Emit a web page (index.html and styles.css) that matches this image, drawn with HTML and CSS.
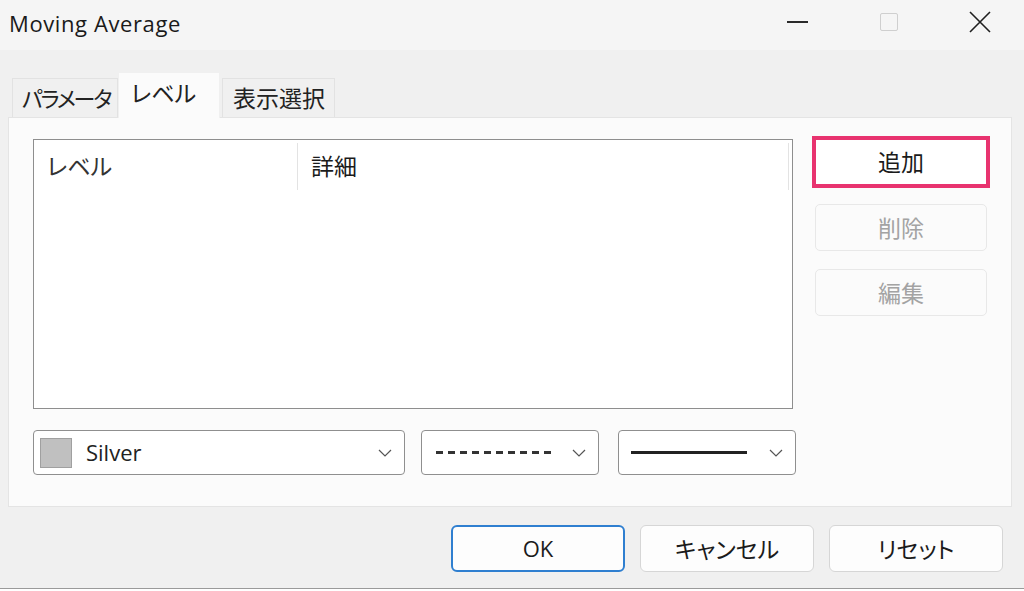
FILE: index.html
```html
<!DOCTYPE html>
<html lang="ja">
<head>
<meta charset="utf-8">
<link rel="stylesheet" href="styles.css">
</head>
<body>
<div class="window">
  <div class="titlebar">
    <div class="title">Moving Average</div>
    <div class="controls">
      <div class="ctl"><span class="min"></span></div>
      <div class="ctl"><span class="max"></span></div>
      <div class="ctl close">
        <svg width="24" height="24" viewBox="0 0 24 24"><path d="M2 2 L22 22 M22 2 L2 22" stroke="#1f1f1f" stroke-width="1.6" fill="none"/></svg>
      </div>
    </div>
  </div>
  <div class="body">
    <div class="tabs">
      <div class="tab t-param">パラメータ</div>
      <div class="tab active">レベル</div>
      <div class="tab t-view">表示選択</div>
    </div>
    <div class="panel">
      <div class="main">
        <div class="list">
          <div class="list-head">
            <div class="col col1">レベル</div>
            <div class="col col2">詳細</div>
          </div>
        </div>
        <div class="side">
          <div class="btn add">追加</div>
          <div class="btn disabled">削除</div>
          <div class="btn disabled">編集</div>
        </div>
      </div>
      <div class="selects">
        <div class="select s-color">
          <span class="swatch"></span>
          <span class="label">Silver</span>
          <span class="chev"><svg width="14" height="8" viewBox="0 0 14 8"><path d="M1 1 L7 7 L13 1" stroke="#555" stroke-width="1.2" fill="none"/></svg></span>
        </div>
        <div class="select s-small">
          <span class="dash"></span>
          <span class="chev"><svg width="14" height="8" viewBox="0 0 14 8"><path d="M1 1 L7 7 L13 1" stroke="#555" stroke-width="1.2" fill="none"/></svg></span>
        </div>
        <div class="select s-small">
          <span class="solid"></span>
          <span class="chev"><svg width="14" height="8" viewBox="0 0 14 8"><path d="M1 1 L7 7 L13 1" stroke="#555" stroke-width="1.2" fill="none"/></svg></span>
        </div>
      </div>
    </div>
    <div class="footer">
      <div class="fbtn ok">OK</div>
      <div class="fbtn">キャンセル</div>
      <div class="fbtn">リセット</div>
    </div>
  </div>
</div>
</body>
</html>
```

FILE: styles.css
```css
* { box-sizing: border-box; }
html, body { margin: 0; padding: 0; }
body {
  background: #ffffff;
  font-family: "Noto Sans CJK JP", "Noto Sans", sans-serif;
  color: #1b1b1b;
  font-feature-settings: "palt";
}
.window {
  width: 1024px;
  height: 589px;
  background: #f0f0f0;
  border-bottom: 1px solid #9a9a9a;
}
.titlebar {
  height: 50px;
  background: #f5f5f5;
  display: flex;
  align-items: center;
  justify-content: space-between;
}
.title {
  font-family: "Open Sans", "Noto Sans", sans-serif;
  font-size: 22px;
  letter-spacing: 0.6px;
  padding-left: 9px;
  padding-bottom: 5px;
  color: #1a1a1a;
}
.controls { display: flex; height: 100%; }
.ctl {
  width: 92px;
  display: flex;
  align-items: center;
  justify-content: center;
  padding-bottom: 6px;
}
.ctl.close { width: 89px; }
.min { width: 21px; height: 2px; background: #2a2a2a; }
.max { width: 18px; height: 18px; border: 1.5px solid #cfcfcf; border-radius: 2px; }
.body { padding: 22px 12px 0 8px; }
.tabs { display: flex; align-items: flex-end; height: 45px; padding-left: 4px; }
.tab {
  font-size: 23px;
  height: 39px;
  padding: 0 0 2px 10px;
  display: flex;
  align-items: center;
  white-space: nowrap;
  overflow: hidden;
  background: #f0f0f0;
  border: 1px solid #e2e2e2;
  border-bottom: none;
  color: #222;
}
.t-param { width: 106px; font-size: 22px; letter-spacing: -2.2px; padding-left: 9px; }
.tab.active {
  height: 46px;
  width: 102px;
  background: #fbfbfb;
  border-color: #f0f0f0;
  padding-left: 12px;
  padding-bottom: 8px;
  margin-bottom: -1px;
  position: relative;
  z-index: 1;
}
.t-view { width: 113px; margin-left: 2px; }
.panel {
  height: 390px;
  background: #fbfbfb;
  border: 1px solid #e4e4e4;
  padding: 21px 0 0 24px;
}
.main { display: flex; }
.list {
  width: 760px;
  height: 270px;
  background: #fff;
  border: 1.5px solid #8e8e8e;
}
.list-head { display: flex; height: 50px; padding-top: 3px; }
.col {
  font-size: 23px;
  display: flex;
  align-items: center;
  padding-bottom: 4px;
}
.col1 { width: 264px; padding-left: 13px; border-right: 1px solid #e3e3e3; color: #333; }
.col2 { width: 491px; padding-left: 13px; border-right: 1px solid #e3e3e3; }
.side {
  display: flex;
  flex-direction: column;
  margin-left: 19px;
  margin-top: -3px;
}
.btn {
  width: 172px;
  height: 47px;
  font-size: 23px;
  display: flex;
  align-items: center;
  justify-content: center;
  border: 1px solid #e8e8e8;
  border-radius: 5px;
  background: #fbfbfb;
  margin-left: 3px;
  margin-bottom: 18px;
  padding-bottom: 2px;
}
.btn.add {
  width: 178px;
  height: 52px;
  margin-left: 0;
  margin-bottom: 16px;
  border: 4px solid #e8336f;
  border-radius: 0;
  background: #ffffff;
  color: #1b1b1b;
}
.btn.disabled { color: #a3a3a3; }
.selects { display: flex; margin-top: 21px; }
.select {
  height: 45px;
  background: #fff;
  border: 1.5px solid #8f8f8f;
  border-radius: 4px;
  display: flex;
  align-items: center;
}
.s-color { width: 372px; padding-left: 6px; }
.s-small { width: 178px; margin-left: 16px; padding-left: 14px; }
.s-small:last-child { margin-left: 19px; padding-left: 12px; }
.swatch {
  width: 32px;
  height: 30px;
  background: #c0c0c0;
  border: 1.5px solid #a0a0a0;
}
.label {
  font-family: "Open Sans", "Noto Sans", sans-serif;
  font-size: 22px;
  margin-left: 14px;
  color: #222;
  padding-bottom: 2px;
}
.chev { margin-left: auto; margin-right: 12px; display: flex; }
.dash {
  width: 116px;
  height: 3px;
  background: repeating-linear-gradient(90deg, #333 0 7px, transparent 7px 12px);
}
.solid { width: 116px; height: 2.5px; background: #222; }
.footer {
  display: flex;
  justify-content: flex-end;
  gap: 15px;
  padding: 18px 9px 0 0;
}
.fbtn {
  width: 174px;
  height: 47px;
  font-size: 23px;
  display: flex;
  align-items: center;
  justify-content: center;
  background: #fdfdfd;
  border: 1px solid #d6d6d6;
  border-radius: 6px;
  color: #1b1b1b;
  padding-bottom: 2px;
}
.fbtn.ok {
  border: 2px solid #2f7fd0;
  font-family: "Open Sans", "Noto Sans", sans-serif;
  font-size: 22px;
}
```
